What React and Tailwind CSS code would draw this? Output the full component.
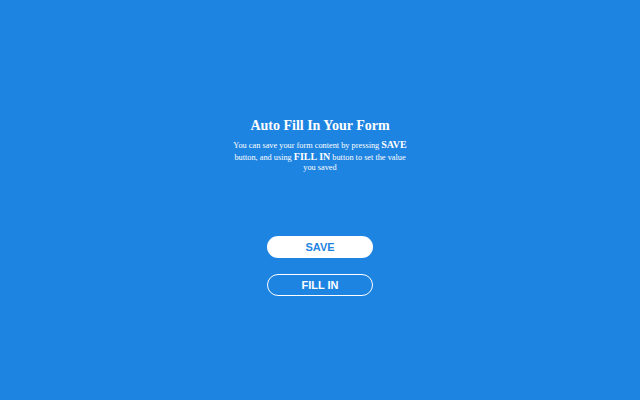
export default function App() {
  return (
    <div className="w-[640px] h-[400px] bg-[#1e84e2] flex flex-col items-center text-white">
      <h1 className="mt-[117px] text-[14px] leading-[17px] font-bold font-['Liberation_Serif',serif]">
        Auto Fill In Your Form
      </h1>
      <p className="mt-[6px] w-[180px] text-center text-[8.3px] leading-[10.6px] font-['Liberation_Serif',serif]">
        You can save your form content by pressing <b className="text-[10px] leading-[10.6px]">SAVE</b> button, and using{' '}
        <b className="text-[10px] leading-[10.6px]">FILL IN</b> button to set the value you saved
      </p>
      <button className="mt-[62px] w-[106px] h-[22px] rounded-full bg-white text-[#1e84e2] text-[11px] font-bold font-['Liberation_Sans',sans-serif]">
        SAVE
      </button>
      <button className="mt-[16px] w-[106px] h-[22px] rounded-full border border-white text-white text-[11px] font-bold font-['Liberation_Sans',sans-serif]">
        FILL IN
      </button>
    </div>
  );
}
